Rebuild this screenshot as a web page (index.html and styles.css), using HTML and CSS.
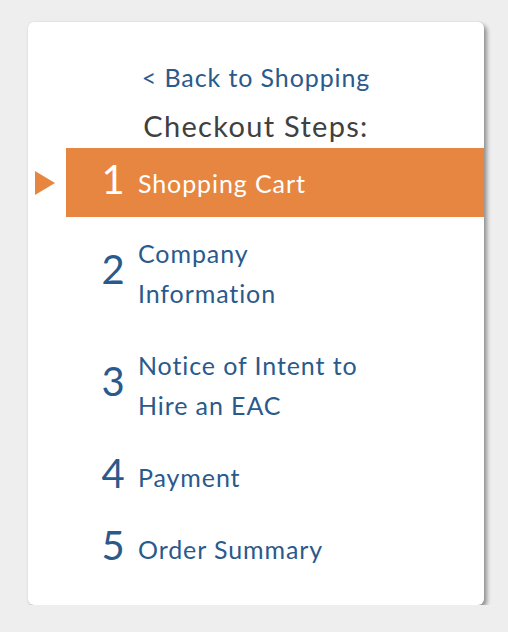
FILE: index.html
```html
<!DOCTYPE html>
<html lang="en">
<head>
<meta charset="utf-8">
<title>Checkout Steps</title>
<link rel="stylesheet" href="styles.css">
</head>
<body>
<div class="card">
  <header class="card-head">
    <a class="back-link" href="#">&lt; Back to Shopping</a>
    <h2 class="title">Checkout Steps:</h2>
  </header>
  <ol class="steps">
    <li class="step is-active"><span class="num">1</span><span class="label">Shopping Cart</span></li>
    <li class="step"><span class="num">2</span><span class="label">Company Information</span></li>
    <li class="step"><span class="num">3</span><span class="label">Notice of Intent to Hire an EAC</span></li>
    <li class="step"><span class="num">4</span><span class="label">Payment</span></li>
    <li class="step"><span class="num">5</span><span class="label">Order Summary</span></li>
  </ol>
</div>
</body>
</html>
```
FILE: styles.css
```css
html, body {
  margin: 0;
  padding: 0;
  background: #eeeeee;
}
body {
  font-family: Lato, "Open Sans", sans-serif;
  padding: 22px 0 0 28px;
}
.card {
  width: 456px;
  background: #ffffff;
  border-radius: 6px;
  box-shadow: 3px 3px 4px rgba(0, 0, 0, 0.38), 0 0 2px rgba(0, 0, 0, 0.1);
  padding: 40px 0 20px;
  box-sizing: border-box;
}
.card-head {
  display: flex;
  flex-direction: column;
  align-items: center;
}
.back-link {
  color: #2a5a8c;
  text-decoration: none;
  font-size: 25px;
  line-height: 30px;
  letter-spacing: 0.9px;
}
.title {
  margin: 17px 0 5px;
  font-size: 29px;
  line-height: 34px;
  font-weight: normal;
  color: #404040;
  letter-spacing: 1.3px;
}
.steps {
  list-style: none;
  margin: 0 0 0 38px;
  padding: 0;
}
.step {
  position: relative;
  display: flex;
  align-items: center;
  gap: 12px;
  padding: 16px 0 16px 34px;
  color: #2a5a8c;
}
.step.is-active {
  background: #e78641;
  color: #ffffff;
  padding: 14.5px 0 14.5px 34px;
}
.step.is-active::before {
  content: "";
  position: absolute;
  left: -31px;
  top: 50%;
  margin-top: -12px;
  border-style: solid;
  border-width: 12px 0 12px 20px;
  border-color: transparent transparent transparent #e78641;
}
.num {
  width: 26px;
  text-align: center;
  font-size: 40px;
  line-height: 32px;
  padding-bottom: 8px;
  flex: none;
}
.label {
  max-width: 235px;
  font-size: 25px;
  line-height: 40px;
  letter-spacing: 0.9px;
}
```
